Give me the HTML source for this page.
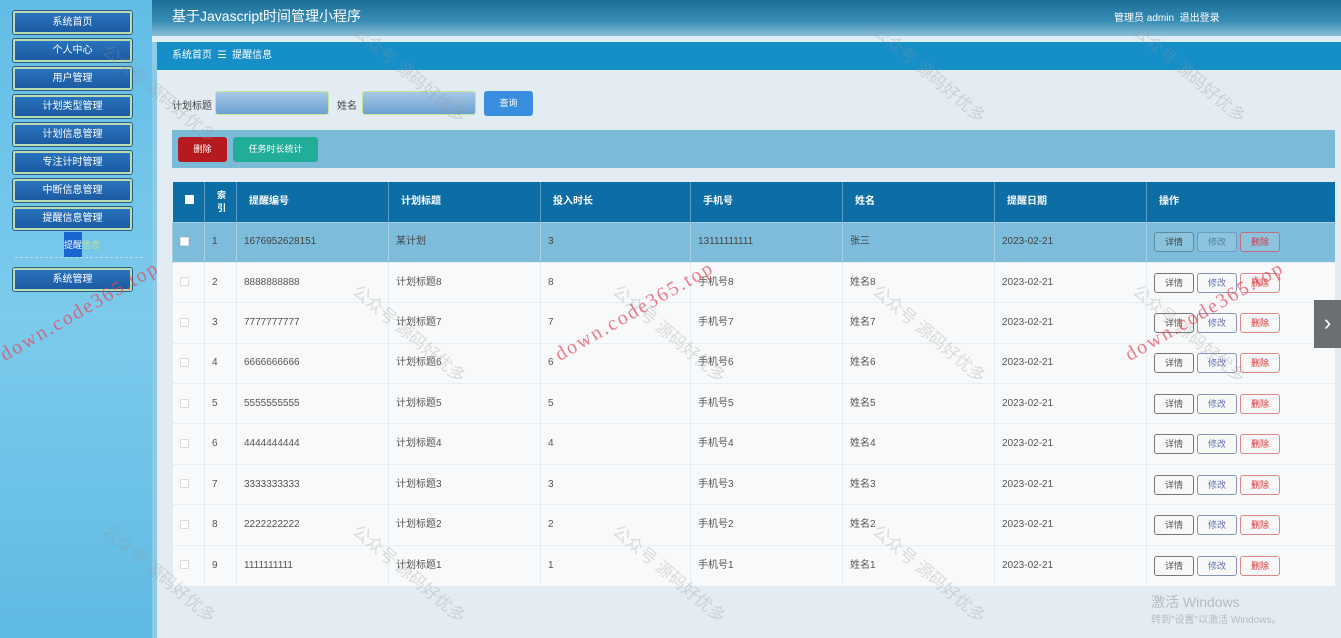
<!DOCTYPE html>
<html><head><meta charset="utf-8"><style>
*{margin:0;padding:0;box-sizing:border-box}
body{width:1341px;height:638px;overflow:hidden;position:relative;font-family:"Liberation Sans","Noto Sans CJK SC",sans-serif;background:#e3ecf2;font-size:10px;color:#444}
.side{position:absolute;left:0;top:0;width:152px;height:638px;background:linear-gradient(180deg,#62bde6,#7ccbec 50%,#5fb9e3)}
.nb{position:absolute;left:13px;width:119px;height:23px;background:linear-gradient(180deg,#2a73bd,#1b5ba3);border:2px solid #b9dcb0;border-radius:2px;color:#fff;font-size:10px;text-align:center;line-height:19px;box-shadow:0 0 0 1px #2b5d88}
.hdr{position:absolute;left:152px;top:0;width:1189px;height:36px;background:linear-gradient(180deg,#1a6e98,#3a8db5 60%,#8cc0d8);color:#fff}
.crumb{position:absolute;left:157px;top:42px;width:1184px;height:28px;background:#168ec8;color:#fff;font-size:10px;line-height:28px;padding-left:15px}
.inp{position:absolute;top:91px;width:114px;height:24px;background:linear-gradient(180deg,#a8c9e6,#6c9fd2);border:1px solid #c6e39a;border-radius:3px}
.bar{position:absolute;left:172px;top:130px;width:1163px;height:38px;background:#7cbbd8}
table{position:absolute;left:172px;top:182px;width:1163px;border-collapse:collapse;font-size:10px;table-layout:fixed}
th{background:#0d6ea6;color:#fff;height:40px;text-align:left;padding-left:12px;font-weight:bold;border-left:1px solid #5a9cc6;line-height:13px}
td{height:40.4px;padding-left:7px;border-left:1px solid #e6ecef;border-top:1px solid #e8eef1;background:#f7f9fa;color:#555;vertical-align:middle;line-height:14px;white-space:nowrap}
td span,td{vertical-align:middle}
tr.h td{background:#7dbcdb;border-color:#a6d0e4;color:#444}
.cb{display:inline-block;width:9px;height:9px;background:#fff;border:1px solid #ddd}
.b{display:inline-block;width:40px;height:20px;border:1px solid #777;border-radius:3px;text-align:center;line-height:18px;font-size:9px;margin-right:3px;background:#f8f8f8}
.wm{position:absolute;color:rgba(150,150,150,.3);font-size:17px;transform:rotate(40deg);white-space:nowrap}
.wr{position:absolute;color:rgba(230,70,90,.7);font-family:"Liberation Serif",serif;font-size:20px;transform:rotate(-30deg);white-space:nowrap;letter-spacing:2px}
</style></head><body>
<div class="side">
<div class="nb" style="top:11px">系统首页</div>
<div class="nb" style="top:39px">个人中心</div>
<div class="nb" style="top:67px">用户管理</div>
<div class="nb" style="top:95px">计划类型管理</div>
<div class="nb" style="top:123px">计划信息管理</div>
<div class="nb" style="top:151px">专注计时管理</div>
<div class="nb" style="top:179px">中断信息管理</div>
<div class="nb" style="top:207px">提醒信息管理</div>
<div style="position:absolute;left:64px;top:232px;width:18px;height:25px;background:#1a66d0"></div>
<div style="position:absolute;left:64px;top:238px;font-size:9px;color:#fff">提醒<span style="color:#c9e07a">信息</span></div>
<div style="position:absolute;left:15px;top:257px;width:128px;border-top:1px dashed #b5dcef"></div>
<div class="nb" style="top:268px">系统管理</div>
</div>
<div class="hdr"><div style="position:absolute;left:20px;top:6px;font-size:14px">基于Javascript时间管理小程序</div><div style="position:absolute;left:962px;top:9px;font-size:10px">管理员 admin &nbsp;退出登录</div></div>
<div style="position:absolute;left:152px;top:36px;width:1189px;height:6px;background:#dfeef6"></div>
<div style="position:absolute;left:152px;top:42px;width:5px;height:596px;background:#8ccbe8"></div>
<div class="crumb">系统首页 &nbsp;☰ &nbsp;提醒信息</div>
<div style="position:absolute;left:172px;top:97px;font-size:10px">计划标题</div>
<div class="inp" style="left:215px"></div>
<div style="position:absolute;left:337px;top:97px;font-size:10px">姓名</div>
<div class="inp" style="left:362px"></div>
<div style="position:absolute;left:484px;top:91px;width:49px;height:25px;background:#3a8ee0;border-radius:3px;color:#fff;text-align:center;line-height:25px;font-size:9px">查询</div>
<div class="bar"></div>
<div style="position:absolute;left:178px;top:137px;width:49px;height:25px;background:#b51a1e;border-radius:3px;color:#fff;text-align:center;line-height:25px;font-size:9px">删除</div>
<div style="position:absolute;left:233px;top:137px;width:85px;height:25px;background:#22ad98;border-radius:3px;color:#fff;text-align:center;line-height:25px;font-size:9px">任务时长统计</div>
<table>
<colgroup><col style="width:32px"><col style="width:32px"><col style="width:152px"><col style="width:152px"><col style="width:150px"><col style="width:152px"><col style="width:152px"><col style="width:152px"><col></colgroup>
<tr><th style="padding-left:12px;border-left:none"><span class="cb" style="border:none"></span></th><th style="padding-left:12px;font-size:9px">索<br>引</th><th>提醒编号</th><th>计划标题</th><th>投入时长</th><th>手机号</th><th>姓名</th><th>提醒日期</th><th>操作</th></tr>
<tr class="h"><td><span class="cb"></span></td><td>1</td><td>1676952628151</td><td>某计划</td><td>3</td><td>13111111111</td><td>张三</td><td>2023-02-21</td><td><span class="b" style="border-color:#5d8aa0;background:#8cc3dd">详情</span><span class="b" style="border-color:#6c9cbf;background:#8cc3dd;color:#5a7cae">修改</span><span class="b" style="border-color:#c07080;background:#8cc3dd;color:#d03a50">删除</span></td></tr>
<tr><td><span class="cb"></span></td><td>2</td><td>8888888888</td><td>计划标题8</td><td>8</td><td>手机号8</td><td>姓名8</td><td>2023-02-21</td><td><span class="b">详情</span><span class="b" style="border-color:#8a93b8;color:#6670b0">修改</span><span class="b" style="border-color:#d88;color:#d33">删除</span></td></tr>
<tr><td><span class="cb"></span></td><td>3</td><td>7777777777</td><td>计划标题7</td><td>7</td><td>手机号7</td><td>姓名7</td><td>2023-02-21</td><td><span class="b">详情</span><span class="b" style="border-color:#8a93b8;color:#6670b0">修改</span><span class="b" style="border-color:#d88;color:#d33">删除</span></td></tr>
<tr><td><span class="cb"></span></td><td>4</td><td>6666666666</td><td>计划标题6</td><td>6</td><td>手机号6</td><td>姓名6</td><td>2023-02-21</td><td><span class="b">详情</span><span class="b" style="border-color:#8a93b8;color:#6670b0">修改</span><span class="b" style="border-color:#d88;color:#d33">删除</span></td></tr>
<tr><td><span class="cb"></span></td><td>5</td><td>5555555555</td><td>计划标题5</td><td>5</td><td>手机号5</td><td>姓名5</td><td>2023-02-21</td><td><span class="b">详情</span><span class="b" style="border-color:#8a93b8;color:#6670b0">修改</span><span class="b" style="border-color:#d88;color:#d33">删除</span></td></tr>
<tr><td><span class="cb"></span></td><td>6</td><td>4444444444</td><td>计划标题4</td><td>4</td><td>手机号4</td><td>姓名4</td><td>2023-02-21</td><td><span class="b">详情</span><span class="b" style="border-color:#8a93b8;color:#6670b0">修改</span><span class="b" style="border-color:#d88;color:#d33">删除</span></td></tr>
<tr><td><span class="cb"></span></td><td>7</td><td>3333333333</td><td>计划标题3</td><td>3</td><td>手机号3</td><td>姓名3</td><td>2023-02-21</td><td><span class="b">详情</span><span class="b" style="border-color:#8a93b8;color:#6670b0">修改</span><span class="b" style="border-color:#d88;color:#d33">删除</span></td></tr>
<tr><td><span class="cb"></span></td><td>8</td><td>2222222222</td><td>计划标题2</td><td>2</td><td>手机号2</td><td>姓名2</td><td>2023-02-21</td><td><span class="b">详情</span><span class="b" style="border-color:#8a93b8;color:#6670b0">修改</span><span class="b" style="border-color:#d88;color:#d33">删除</span></td></tr>
<tr><td><span class="cb"></span></td><td>9</td><td>1111111111</td><td>计划标题1</td><td>1</td><td>手机号1</td><td>姓名1</td><td>2023-02-21</td><td><span class="b">详情</span><span class="b" style="border-color:#8a93b8;color:#6670b0">修改</span><span class="b" style="border-color:#d88;color:#d33">删除</span></td></tr>
</table>
<div style="position:absolute;left:1314px;top:300px;width:27px;height:48px;background:#6a6f73;color:#fff;font-size:22px;text-align:center;line-height:46px">›</div>
<div style="position:absolute;left:1151px;top:592px;color:#b5bcc2;font-size:14px">激活 Windows</div>
<div style="position:absolute;left:1151px;top:611px;color:#b5bcc2;font-size:10px">转到"设置"以激活 Windows。</div>
<div class="wm" style="left:90px;top:80px">公众号 源码好优多</div>
<div class="wm" style="left:340px;top:60px">公众号 源码好优多</div>
<div class="wm" style="left:860px;top:60px">公众号 源码好优多</div>
<div class="wm" style="left:1120px;top:60px">公众号 源码好优多</div>
<div class="wm" style="left:340px;top:320px">公众号 源码好优多</div>
<div class="wm" style="left:860px;top:320px">公众号 源码好优多</div>
<div class="wm" style="left:600px;top:320px">公众号 源码好优多</div>
<div class="wm" style="left:1120px;top:320px">公众号 源码好优多</div>
<div class="wm" style="left:90px;top:560px">公众号 源码好优多</div>
<div class="wm" style="left:340px;top:560px">公众号 源码好优多</div>
<div class="wm" style="left:600px;top:560px">公众号 源码好优多</div>
<div class="wm" style="left:860px;top:560px">公众号 源码好优多</div>
<div class="wr" style="left:-10px;top:300px">down.code365.top</div>
<div class="wr" style="left:545px;top:300px">down.code365.top</div>
<div class="wr" style="left:1115px;top:300px">down.code365.top</div>
</body></html>
